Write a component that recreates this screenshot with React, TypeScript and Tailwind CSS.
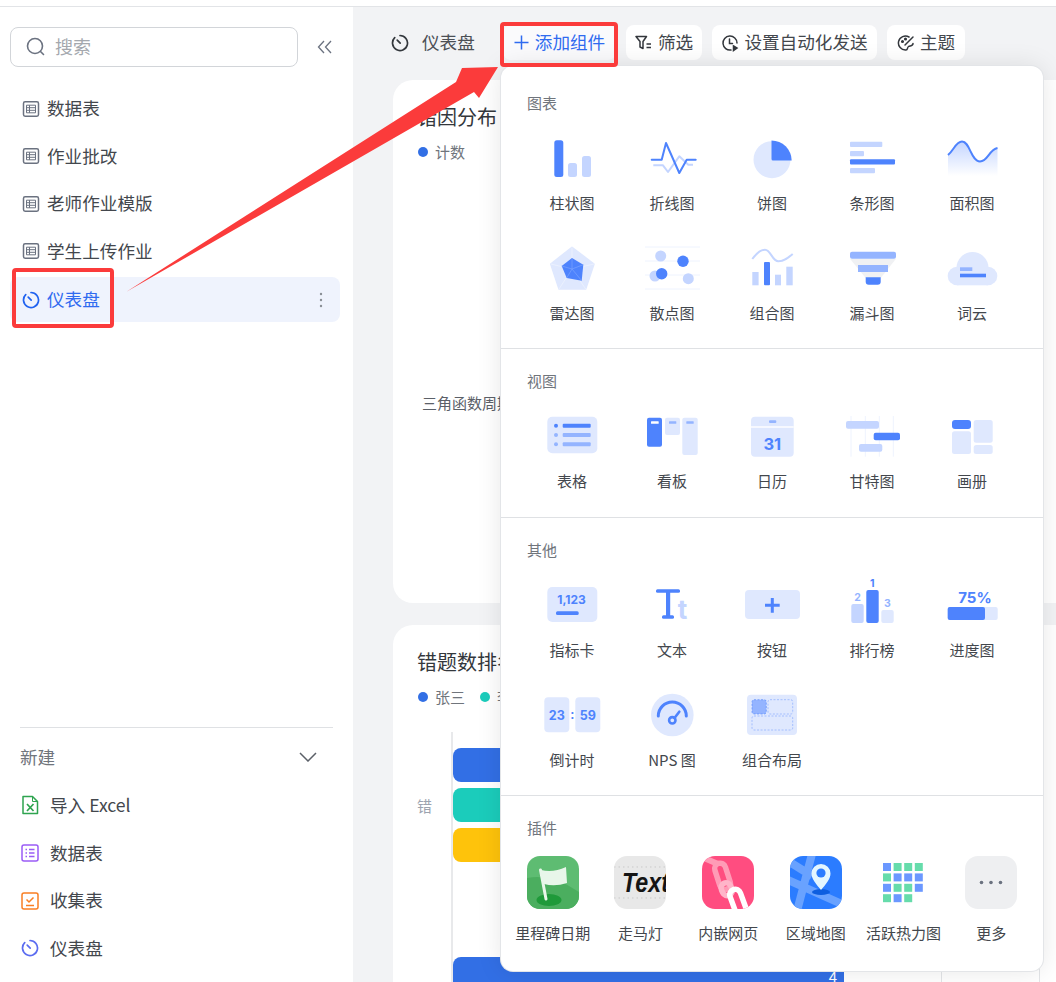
import type { ReactNode } from 'react';

const DARK = '#4e83fd';
const MID = '#94b4ff';
const LIGHT = '#c4d5ff';
const PALE = '#dfe8fe';

function Box({ children, size = 60 }: { children: ReactNode; size?: number }) {
  return (
    <svg width={size} height={size} viewBox={`0 0 ${size} ${size}`} fill="none">
      {children}
    </svg>
  );
}

// ---- chart icons ----
const BarIcon = () => (
  <Box>
    <rect x="12.3" y="12.3" width="9" height="36.7" rx="2.5" fill={DARK} />
    <rect x="26" y="35" width="9" height="14" rx="2.5" fill={LIGHT} />
    <rect x="40" y="28" width="9" height="21" rx="2.5" fill={LIGHT} />
  </Box>
);
const LineIcon = () => (
  <Box>
    <path d="M11.3 37.3H21L26 44L37.3 28.3L46.3 36.7H51" stroke={LIGHT} strokeWidth="2" strokeLinejoin="round" />
    <path d="M9.7 31.7H19.7L24 15L37.3 45L44.7 31.7H53.7" stroke={DARK} strokeWidth="2" strokeLinejoin="round" strokeLinecap="round" />
  </Box>
);
const PieIcon = () => (
  <Box>
    <circle cx="30" cy="31.7" r="18.5" fill={PALE} />
    <path d="M29.5 12.5A20.3 20.3 0 0 1 49.7 32.5L31 32.5Q29.5 32.5 29.5 31Z" fill={DARK} />
  </Box>
);
const HBarIcon = () => (
  <Box>
    <rect x="8" y="13.7" width="32.3" height="5.3" rx="1" fill={LIGHT} />
    <rect x="8" y="23" width="14" height="5.3" rx="1" fill={LIGHT} />
    <rect x="8" y="31.3" width="45" height="5.3" rx="1" fill={DARK} />
    <rect x="8" y="40" width="25" height="5.3" rx="1" fill={LIGHT} />
  </Box>
);
const AreaIcon = () => (
  <Box>
    <defs>
      <linearGradient id="area-fill" x1="0" y1="0" x2="0" y2="1">
        <stop offset="0" stopColor={LIGHT} />
        <stop offset="1" stopColor="#ffffff" />
      </linearGradient>
    </defs>
    <path d="M6 27C12 22 14 13.5 20 13.5C28 13.5 29 33.5 38 33.5C46 33.5 47 21.5 55.5 20V48H6Z" fill="url(#area-fill)" />
    <path d="M6 27C12 22 14 13.5 20 13.5C28 13.5 29 33.5 38 33.5C46 33.5 47 21.5 55.5 20" stroke={DARK} strokeWidth="2" />
  </Box>
);
const RadarIcon = () => (
  <Box>
    <path d="M30 9.3L52 26L43.7 51H17L8.7 26Z" fill={PALE} stroke={PALE} strokeWidth="1.5" strokeLinejoin="round" />
    <path d="M30 31L30 9.3M30 31L52 26M30 31L43.7 51M30 31L17 51M30 31L8.7 26" stroke="#eef3fe" strokeWidth="0.8" />
    <path d="M30 20L41.3 26.7L39.7 42.7L24.7 40L19.7 28Z" fill={DARK} />
    <path d="M30 31L30 20M30 31L41.3 26.7M30 31L39.7 42.7M30 31L24.7 40M30 31L19.7 28" stroke="#7aa2fd" strokeWidth="0.7" />
  </Box>
);
const ScatterIcon = () => (
  <Box>
    <path d="M3 9H58M3 23H58M3 37H58M3 51H58" stroke="#eef3fe" strokeWidth="1" />
    <circle cx="18.7" cy="18" r="5.5" fill={LIGHT} />
    <circle cx="41" cy="23.3" r="5.7" fill={DARK} />
    <circle cx="13" cy="38" r="5.5" fill={LIGHT} />
    <circle cx="19.7" cy="35.7" r="5.7" fill={DARK} />
    <circle cx="46.3" cy="40.7" r="5.5" fill={LIGHT} />
  </Box>
);
const ComboIcon = () => (
  <Box>
    <path d="M10.3 21C14 16 18 11.7 23 11.7C29 11.7 30 23.3 36.3 23.3C42 23.3 46 20 50.7 16" stroke={LIGHT} strokeWidth="2" />
    <rect x="10.3" y="34" width="6.3" height="13.3" fill={LIGHT} />
    <rect x="22" y="24" width="6" height="23.3" rx="1" fill={DARK} />
    <rect x="33" y="36.7" width="6" height="10.6" fill={LIGHT} />
    <rect x="44.3" y="28.7" width="6.4" height="18.6" fill={LIGHT} />
  </Box>
);
const FunnelIcon = () => (
  <Box>
    <path d="M8 20.7H54L38.7 40H23.7Z" fill="#f0f1f3" />
    <rect x="8" y="13.7" width="46" height="7" rx="2" fill={MID} />
    <rect x="16" y="27" width="30" height="7" fill={MID} />
    <path d="M23.7 39.3H38.7V43.7Q38.7 46.7 35.7 46.7H26.7Q23.7 46.7 23.7 43.7Z" fill={DARK} />
  </Box>
);
const CloudIcon = () => (
  <Box>
    <circle cx="15" cy="38" r="9.3" fill={PALE} />
    <circle cx="46" cy="38" r="9.3" fill={PALE} />
    <circle cx="30.5" cy="30" r="16" fill={PALE} />
    <rect x="15" y="30" width="31" height="17.3" fill={PALE} />
    <rect x="18" y="29.3" width="12.3" height="3.7" fill={MID} />
    <rect x="18" y="35.7" width="26" height="3.6" fill={DARK} />
  </Box>
);

// ---- view icons ----
const TableIcon = () => (
  <Box>
    <rect x="5.3" y="10.7" width="50" height="36.6" rx="5" fill={PALE} />
    <circle cx="14" cy="19.7" r="2" fill={DARK} />
    <circle cx="14" cy="29" r="2" fill={MID} />
    <circle cx="14" cy="38.3" r="2" fill={MID} />
    <rect x="20.7" y="17.7" width="28" height="4" rx="1" fill={DARK} />
    <rect x="20.7" y="27" width="28" height="4" rx="1" fill={MID} />
    <rect x="20.7" y="36.3" width="28" height="4" rx="1" fill={MID} />
  </Box>
);
const KanbanIcon = () => (
  <Box>
    <rect x="5" y="11.7" width="15" height="29" rx="2" fill={DARK} />
    <rect x="9" y="15.3" width="7.7" height="2.4" rx="0.5" fill="#ffffff" />
    <rect x="23" y="11.7" width="15" height="17.3" rx="2" fill={PALE} />
    <rect x="27" y="15.3" width="7.3" height="2.4" rx="0.5" fill={MID} />
    <rect x="40.3" y="11.7" width="15.4" height="37.3" rx="2" fill={PALE} />
    <rect x="44.3" y="15.3" width="7.4" height="2.4" rx="0.5" fill={MID} />
  </Box>
);
const CalendarIcon = () => (
  <Box>
    <rect x="9" y="10.7" width="42.7" height="40" rx="4" fill={PALE} />
    <rect x="9" y="20.3" width="42.7" height="1.4" fill="#ffffff" />
    <rect x="27" y="14.3" width="7.3" height="2.7" rx="1" fill={MID} />
    <text x="30.3" y="44" textAnchor="middle" fontSize="16.5" fontWeight="700" fill={DARK} fontFamily="Inter, sans-serif">31</text>
  </Box>
);
const GanttIcon = () => (
  <Box>
    <path d="M9 10V50.7M23.3 10V50.7M37.3 10V50.7M51.3 10V50.7" stroke="#eef3fe" strokeWidth="1" />
    <rect x="4" y="15" width="33" height="7.7" rx="2" fill={LIGHT} />
    <rect x="31.7" y="26.7" width="26.3" height="7.6" rx="2" fill={DARK} />
    <rect x="17" y="38" width="23.3" height="7.7" rx="2" fill={LIGHT} />
  </Box>
);
const AlbumIcon = () => (
  <Box>
    <rect x="10" y="14" width="19" height="9" rx="3" fill={DARK} />
    <rect x="10" y="25.3" width="19" height="22.7" rx="2.5" fill={PALE} />
    <rect x="31.7" y="14" width="19" height="22.7" rx="2.5" fill={PALE} />
    <rect x="31.7" y="39" width="19" height="9" rx="2.5" fill={PALE} />
  </Box>
);

// ---- other icons ----
const MetricIcon = () => (
  <Box>
    <rect x="5.3" y="12" width="50" height="35" rx="5" fill={PALE} />
    <text x="29.5" y="29" textAnchor="middle" fontSize="12" fontWeight="700" fill={DARK} fontFamily="Inter, sans-serif">1,123</text>
    <rect x="14" y="36.3" width="22.7" height="3.7" rx="1.5" fill={DARK} />
  </Box>
);
const TextIcon = () => (
  <Box>
    <rect x="14" y="14.3" width="24" height="3.4" rx="1.5" fill={DARK} />
    <rect x="24" y="15" width="4.2" height="27" fill={DARK} />
    <rect x="20" y="40.3" width="12" height="3.4" rx="1.5" fill={DARK} />
    <text x="40.5" y="43.5" textAnchor="middle" fontSize="26" fontWeight="700" fill={LIGHT} fontFamily="Inter, sans-serif">t</text>
  </Box>
);
const ButtonIcon = () => (
  <Box>
    <rect x="3" y="15" width="55" height="29" rx="4" fill={PALE} />
    <path d="M30.3 23V37.7M23 30.3H37.7" stroke={DARK} strokeWidth="3" />
  </Box>
);
const RankIcon = () => (
  <Box>
    <rect x="9.3" y="29" width="12.4" height="19" rx="2" fill={LIGHT} />
    <rect x="24.3" y="15" width="12.4" height="33" rx="2" fill={DARK} />
    <rect x="39.3" y="35" width="12.4" height="13" rx="2" fill={PALE} />
    <g fontSize="10.5" fontWeight="700" textAnchor="middle" fontFamily="Inter, sans-serif">
      <text x="30.3" y="12" fill={DARK}>1</text>
      <text x="15.5" y="26" fill={MID}>2</text>
      <text x="45.5" y="32.3" fill={MID}>3</text>
    </g>
  </Box>
);
const ProgressIcon = () => (
  <Box>
    <rect x="5.7" y="32" width="50" height="13" rx="2" fill={PALE} />
    <rect x="5.7" y="32" width="37.3" height="13" rx="2" fill={DARK} />
    <text x="33" y="28" textAnchor="middle" fontSize="15" fontWeight="700" fill={DARK} fontFamily="Inter, sans-serif">75%</text>
  </Box>
);
const CountdownIcon = () => (
  <Box>
    <rect x="2.3" y="12.3" width="25" height="35" rx="4" fill={PALE} />
    <rect x="33.3" y="12.3" width="25" height="35" rx="4" fill={PALE} />
    <g fontSize="12.5" fontWeight="700" textAnchor="middle" fill={DARK} fontFamily="Inter, sans-serif">
      <text x="14.8" y="34.5">23</text>
      <text x="30.4" y="33.5">:</text>
      <text x="45.8" y="34.5">59</text>
    </g>
  </Box>
);
const NpsIcon = () => (
  <Box>
    <circle cx="30.3" cy="30" r="21.3" fill={PALE} />
    <path d="M16.3 31A14 14 0 0 1 44.3 31" stroke={DARK} strokeWidth="3" strokeLinecap="round" />
    <circle cx="30.3" cy="35.3" r="3.2" stroke={DARK} strokeWidth="2.6" />
    <path d="M32.5 33L37.3 26.7" stroke={DARK} strokeWidth="2.6" strokeLinecap="round" />
  </Box>
);
const LayoutIcon = () => (
  <Box>
    <rect x="5" y="9.7" width="50" height="40.3" rx="4" fill={PALE} />
    <rect x="10" y="14.7" width="14.3" height="14.3" rx="2" fill={MID} stroke={DARK} strokeWidth="0.6" strokeDasharray="2 1.5" />
    <rect x="26" y="14.7" width="24.7" height="14.3" rx="2" stroke={MID} strokeWidth="0.8" strokeDasharray="2 1.5" />
    <rect x="10" y="31" width="40.7" height="14" rx="2" stroke={MID} strokeWidth="0.8" strokeDasharray="2 1.5" />
  </Box>
);

// ---- plugin icons ----
const PluginBox = ({ children }: { children: ReactNode }) => (
  <svg width="52" height="53" viewBox="0 0 52 53" fill="none" className="rounded-[13px]">
    {children}
  </svg>
);
const MilestoneIcon = () => (
  <PluginBox>
    <rect width="52" height="53" fill="#5ebc72" />
    <path d="M0 22Q25 17 52 36V53H0Z" fill="#4bae5f" />
    <ellipse cx="22" cy="44" rx="12.5" ry="6" fill="#1f9a3a" />
    <path d="M13.5 14L19 43" stroke="#e8f6ea" strokeWidth="3" strokeLinecap="round" />
    <path d="M14 14Q26 17 39 11L40 27Q28 31 17 28Z" fill="#e8f6ea" />
  </PluginBox>
);
const MarqueeIcon = () => (
  <PluginBox>
    <rect width="52" height="53" fill="#e8e8e8" />
    <path d="M0 11H52M0 42H52" stroke="#c9c9c9" strokeWidth="1" strokeDasharray="1.5 3" />
    <text x="8" y="36" fontSize="28" fontWeight="700" fontStyle="italic" fill="#141414" textLength="47" lengthAdjust="spacingAndGlyphs" fontFamily="Liberation Sans, sans-serif">Text</text>
  </PluginBox>
);
const EmbedIcon = () => (
  <PluginBox>
    <rect width="52" height="53" fill="#ff4d80" />
    <path d="M2 2L16 8" stroke="#ff9bb6" strokeWidth="6" />
    <rect x="15" y="7" width="11" height="27" rx="5.5" transform="rotate(-18 20 20)" stroke="#ff9bb6" strokeWidth="5.5" />
    <rect x="19.5" y="27" width="10" height="13" rx="5" stroke="#ffb5c9" strokeWidth="5.5" transform="rotate(-25 24 33)" />
    <rect x="30" y="33" width="11" height="30" rx="5.5" transform="rotate(-20 35 45)" stroke="#ffffff" strokeWidth="5.5" />
  </PluginBox>
);
const MapIcon = () => (
  <PluginBox>
    <rect width="52" height="53" fill="#2b7cff" />
    <path d="M22 -2L7 55M-2 24L54 49M-2 5L22 20" stroke="#69a2ff" strokeWidth="8" />
    <ellipse cx="31" cy="36" rx="9" ry="3" fill="#0d5ee0" />
    <path d="M31 34C26 28 21.500 23 21.500 17.500A9.500 9.500 0 0 1 40.500 17.500C40.500 23 36 28 31 34Z" fill="#e3f6ff" />
    <circle cx="31" cy="17" r="4.600" fill="#2b7cff" />
  </PluginBox>
);
const HeatIcon = () => {
  const blue = '#6b98ff';
  const green = '#66dcab';
  const rows = [
    [blue, green, green, green],
    [green, blue, blue, blue],
    [blue, green, green, blue],
    [green, blue, green],
  ];
  return (
    <PluginBox>
      {rows.map((row, r) =>
        row.map((color, c) => (
          <rect key={`${r}-${c}`} x={6 + c * 10.6} y={7 + r * 10.4} width="8" height="8" fill={color} />
        ))
      )}
    </PluginBox>
  );
};
const MoreIcon = () => (
  <PluginBox>
    <rect width="52" height="53" fill="#eeeff1" />
    <circle cx="16.500" cy="26.500" r="1.800" fill="#6b7280" />
    <circle cx="26" cy="26.500" r="1.800" fill="#6b7280" />
    <circle cx="35.500" cy="26.500" r="1.800" fill="#6b7280" />
  </PluginBox>
);

// ---- small ui icons ----
const SheetIcon = ({ color = '#6b7280' }: { color?: string }) => (
  <svg width="18" height="18" viewBox="0 0 18 18" fill="none" stroke={color} strokeWidth="1.5">
    <rect x="1.500" y="1.800" width="15" height="14.400" rx="1.600" />
    <path d="M4.500 5.200H13.500V12.800H4.500ZM4.500 7.700H13.500M4.500 10.300H13.500M7.500 5.200V12.800" strokeWidth="1" />
  </svg>
);
const ClockIcon = ({ color }: { color: string }) => (
  <svg width="18" height="18" viewBox="0 0 18 18" fill="none" stroke={color} strokeWidth="1.700" strokeLinecap="round">
    <path d="M9 1.500A7.500 7.500 0 1 1 3.700 3.700" />
    <path d="M6.200 6.200L9.200 9.200" />
  </svg>
);

const chartItems = [
  { label: '柱状图', icon: BarIcon },
  { label: '折线图', icon: LineIcon },
  { label: '饼图', icon: PieIcon },
  { label: '条形图', icon: HBarIcon },
  { label: '面积图', icon: AreaIcon },
  { label: '雷达图', icon: RadarIcon },
  { label: '散点图', icon: ScatterIcon },
  { label: '组合图', icon: ComboIcon },
  { label: '漏斗图', icon: FunnelIcon },
  { label: '词云', icon: CloudIcon },
];
const viewItems = [
  { label: '表格', icon: TableIcon },
  { label: '看板', icon: KanbanIcon },
  { label: '日历', icon: CalendarIcon },
  { label: '甘特图', icon: GanttIcon },
  { label: '画册', icon: AlbumIcon },
];
const otherItems = [
  { label: '指标卡', icon: MetricIcon },
  { label: '文本', icon: TextIcon },
  { label: '按钮', icon: ButtonIcon },
  { label: '排行榜', icon: RankIcon },
  { label: '进度图', icon: ProgressIcon },
  { label: '倒计时', icon: CountdownIcon },
  { label: 'NPS 图', icon: NpsIcon },
  { label: '组合布局', icon: LayoutIcon },
];
const pluginItems = [
  { label: '里程碑日期', icon: MilestoneIcon },
  { label: '走马灯', icon: MarqueeIcon },
  { label: '内嵌网页', icon: EmbedIcon },
  { label: '区域地图', icon: MapIcon },
  { label: '活跃热力图', icon: HeatIcon },
  { label: '更多', icon: MoreIcon },
];

function IconGrid({ items }: { items: { label: string; icon: () => ReactNode }[] }) {
  return (
    <div className="grid grid-cols-5 w-[500px] gap-y-[24px]">
      {items.map((item) => (
        <div key={item.label} className="flex flex-col items-center gap-[4px]">
          <item.icon />
          <span className="text-[15px] leading-[22px] text-[#43474d]">{item.label}</span>
        </div>
      ))}
    </div>
  );
}

function SectionTitle({ children }: { children: ReactNode }) {
  return <div className="text-[15px] leading-[22px] text-[#70757c]">{children}</div>;
}

function AddWidgetMenu() {
  return (
    <div className="absolute left-[501px] top-[66px] z-10 w-[542px] h-[905px] bg-white rounded-[12px] ring-1 ring-[#e3e5e8] shadow-[0_0_26px_rgba(0,0,0,0.1)]">
      <div className="pl-[26px] pt-[26px]">
        <SectionTitle>图表</SectionTitle>
      </div>
      <div className="pl-[21px] pt-[14px] pb-[24px] border-b border-[#dfe1e4]">
        <IconGrid items={chartItems} />
      </div>
      <div className="pl-[26px] pt-[21px]">
        <SectionTitle>视图</SectionTitle>
      </div>
      <div className="pl-[21px] pt-[14px] pb-[25px] border-b border-[#dfe1e4]">
        <IconGrid items={viewItems} />
      </div>
      <div className="pl-[26px] pt-[21px]">
        <SectionTitle>其他</SectionTitle>
      </div>
      <div className="pl-[21px] pt-[14px] pb-[24px] border-b border-[#dfe1e4]">
        <IconGrid items={otherItems} />
      </div>
      <div className="pl-[26px] pt-[21px]">
        <SectionTitle>插件</SectionTitle>
      </div>
      <div className="pl-[8px] pt-[17px] grid grid-cols-6 w-[534px]">
        {pluginItems.map((item) => (
          <div key={item.label} className="flex flex-col items-center gap-[13px]">
            <item.icon />
            <span className="text-[15px] leading-[22px] text-[#43474d] whitespace-nowrap">{item.label}</span>
          </div>
        ))}
      </div>
    </div>
  );
}

function Sidebar() {
  return (
    <aside className="w-[353px] shrink-0 bg-white flex flex-col justify-between">
      <div>
        <div className="flex items-center pl-[10px] pt-[20px]">
          <div className="w-[288px] h-[40px] border border-[#d2d5d9] rounded-[8px] flex items-center pl-[15px] gap-[9px]">
            <svg width="20" height="20" viewBox="0 0 20 20" fill="none" stroke="#6b7280" strokeWidth="1.600" strokeLinecap="round">
              <circle cx="9" cy="9" r="7.500" />
              <path d="M14.500 14.500L17.500 17.500" />
            </svg>
            <span className="text-[18px] leading-[24px] pb-[2px] text-[#a4a8ae]">搜索</span>
          </div>
          <svg className="ml-[19px]" width="16" height="14" viewBox="0 0 16 14" fill="none" stroke="#6b7280" strokeWidth="1.300">
            <path d="M7 1L1.500 7L7 13M14 1L8.500 7L14 13" />
          </svg>
        </div>
        <div className="flex flex-col gap-[2.5px] mt-[19px] ml-[10px] w-[330px]">
          {['数据表', '作业批改', '老师作业模版', '学生上传作业'].map((label) => (
            <div key={label} className="h-[45px] pl-[12px] flex items-center gap-[7px] text-[17.6px] text-[#43474d]">
              <SheetIcon />
              {label}
            </div>
          ))}
          <div className="h-[45px] mt-[1px] pl-[12px] pr-[17px] flex items-center gap-[7px] text-[17.6px] text-[#2f6bf0] bg-[#eff3fd] rounded-[8px]">
            <ClockIcon color="#1f62f0" />
            <span className="flex-1 pb-[1px]">仪表盘</span>
            <svg width="4" height="16" viewBox="0 0 4 16" fill="#8a8f96">
              <circle cx="2" cy="2" r="1.200" />
              <circle cx="2" cy="8" r="1.200" />
              <circle cx="2" cy="14" r="1.200" />
            </svg>
          </div>
        </div>
      </div>

      <div className="mx-[20px] pb-[10px] border-t border-[#dfe1e4]">
        <div className="h-[44px] mt-[7px] mb-[2.600px] pr-[16px] flex items-center justify-between text-[17.6px] text-[#70757c]">
          新建
          <svg width="18" height="10" viewBox="0 0 18 10" fill="none" stroke="#5b6068" strokeWidth="1.500">
            <path d="M1 1L9 9L17 1" />
          </svg>
        </div>
        <div className="h-[47.600px] flex items-center gap-[11px] pl-[1px] text-[17.6px] text-[#43474d]">
          <svg width="18" height="20" viewBox="0 0 18 20" fill="none" stroke="#2ea44f" strokeWidth="1.500">
            <path d="M2 1.500H11.500L16.500 6.500V18.500H2Z" strokeLinejoin="round" />
            <path d="M11.500 1.500V6.500H16.500" strokeWidth="1" />
            <path d="M6 9L12.500 16M12.500 9L6 16" strokeWidth="1.700" />
          </svg>
          导入 Excel
        </div>
        <div className="h-[47.600px] flex items-center gap-[11px] pl-[1px] text-[17.6px] text-[#43474d]">
          <svg width="18" height="18" viewBox="0 0 18 18" fill="none" stroke="#9b5cf6" strokeWidth="1.500">
            <rect x="1" y="1" width="16" height="16" rx="2" />
            <path d="M4.500 5.500H6M8 5.500H13.500M4.500 9H6M8 9H13.500M4.500 12.500H6M8 12.500H13.500" strokeWidth="1.500" />
          </svg>
          数据表
        </div>
        <div className="h-[47.600px] flex items-center gap-[11px] pl-[1px] text-[17.6px] text-[#43474d]">
          <svg width="18" height="18" viewBox="0 0 18 18" fill="none" stroke="#f97f24" strokeWidth="1.500">
            <rect x="1" y="1" width="16" height="16" rx="2" />
            <path d="M5.500 7.500L8 10L12.500 5.500M5 13.500H13" />
          </svg>
          收集表
        </div>
        <div className="h-[47.600px] flex items-center gap-[11px] pl-[1px] text-[17.6px] text-[#43474d]">
          <ClockIcon color="#5b6cf0" />
          仪表盘
        </div>
      </div>
    </aside>
  );
}

function Toolbar() {
  return (
    <div className="h-[35px] mt-[18px] flex items-center text-[17.6px] leading-[24px] text-[#43474d]">
      <div className="flex items-center gap-[13px] ml-[38px] w-[112px]">
        <svg width="18" height="18" viewBox="0 0 18 18" fill="none" stroke="#33373c" strokeWidth="1.700" strokeLinecap="round">
          <path d="M9 1.500A7.500 7.500 0 1 1 3.700 3.700" />
          <path d="M6.200 6.200L9.200 9.200" />
        </svg>
        <span className="text-[#4b4f55] pb-[2px]">仪表盘</span>
      </div>
      <button className="h-[35px] w-[113px] flex items-center justify-center gap-[6px] bg-[#fafafc] rounded-[8px] text-[#2f6bf0]">
        <svg width="15" height="15" viewBox="0 0 15 15" fill="none" stroke="#2f6bf0" strokeWidth="1.500">
          <path d="M7.500 0.500V14.500M0.500 7.500H14.500" />
        </svg>
        <span className="pb-[2px]">添加组件</span>
      </button>
      <button className="ml-[10px] h-[35px] w-[76px] flex items-center justify-center gap-[5px] bg-white rounded-[8px]">
        <svg width="18" height="16" viewBox="0 0 18 16" fill="none" stroke="#33373c" strokeWidth="1.500" strokeLinejoin="round">
          <path d="M1 1.500H11.500L8 6.500V13.500L5 12V6.500Z" />
          <path d="M11.500 9H16M11.500 12.500H16" />
        </svg>
        <span className="pb-[2px]">筛选</span>
      </button>
      <button className="ml-[10px] h-[35px] w-[165px] flex items-center justify-center gap-[5px] bg-white rounded-[8px]">
        <svg width="18" height="18" viewBox="0 0 18 18" fill="none" stroke="#33373c" strokeWidth="1.500" strokeLinecap="round">
          <path d="M10 16A7 7 0 1 1 16 9" />
          <path d="M8.500 5V9.500H11.500" />
          <path d="M12.500 12L16 14L12.500 16.500Z" fill="#33373c" />
        </svg>
        <span className="pb-[2px]">设置自动化发送</span>
      </button>
      <button className="ml-[10px] h-[35px] w-[78px] flex items-center justify-center gap-[5px] bg-white rounded-[8px]">
        <svg width="18" height="18" viewBox="0 0 18 18" fill="none" stroke="#33373c" strokeWidth="1.500" strokeLinecap="round">
          <path d="M12 3A7 7 0 1 0 9 16C11 16 10 13.500 11.500 12.500C13 11.500 16 12.500 16 9.500" />
          <path d="M8 11L16 3" />
          <circle cx="5.500" cy="7.500" r="0.800" />
          <circle cx="8.500" cy="5" r="0.800" />
        </svg>
        <span className="pb-[2px]">主题</span>
      </button>
    </div>
  );
}

function LegendDot({ color, label }: { color: string; label: string }) {
  return (
    <div className="flex items-center gap-[7px]">
      <span className={`w-[10px] h-[10px] rounded-full ${color}`} />
      <span className="text-[15px] leading-[22px] text-[#70757c]">{label}</span>
    </div>
  );
}

function Cards() {
  return (
    <div className="ml-[40px] mt-[20px] w-[700px] flex flex-col gap-[22px]">
      <div className="h-[523px] shrink-0 bg-white rounded-[20px] pl-[24px] pt-[23px]">
        <div className="text-[20px] leading-[28px] text-[#33373c]">错因分布</div>
        <div className="mt-[10px] ml-[1px] flex">
          <LegendDot color="bg-[#326fe5]" label="计数" />
        </div>
        <div className="mt-[229px] ml-[5px] text-[15px] leading-[22px] text-[#5b6068]">三角函数周期</div>
      </div>

      <div className="shrink-0 bg-white rounded-[20px] pl-[24px] pt-[23px] h-[400px]">
        <div className="text-[20px] leading-[28px] text-[#33373c]">错题数排名</div>
        <div className="mt-[10px] ml-[1px] flex gap-[15px]">
          <LegendDot color="bg-[#326fe5]" label="张三" />
          <LegendDot color="bg-[#1bccbb]" label="李四" />
        </div>
        <div className="mt-[24px] flex">
          <div className="w-[35px] flex items-center pb-[77px] text-[15px] text-[#9ca3af]">错</div>
          <div className="border-l-2 border-[#e8e9eb] pt-[16px] flex flex-col gap-[6px] pb-[95px] -ml-[1px]">
            <div className="w-[500px] h-[34px] bg-[#326fe5] rounded-[8px]" />
            <div className="w-[500px] h-[34px] bg-[#1bccbb] rounded-[8px]" />
            <div className="w-[500px] h-[34px] bg-[#fec30b] rounded-[8px]" />
          </div>
        </div>
        <div className="ml-[34px] border-l-2 border-[#e8e9eb] flex h-[40px]">
          <div className="w-[391px] h-[34px] bg-[#326fe5] rounded-[8px] flex items-center justify-end pr-[7px] pt-[6px] text-[15px] text-white shrink-0">4</div>
          <div className="ml-[97px] w-[98px] border-l border-[#e3e5e8] shrink-0" />
          <div className="w-[98px] border-l border-[#e3e5e8] shrink-0" />
        </div>
      </div>
    </div>
  );
}

export default function App() {
  return (
    <div className="relative w-[1056px] h-[982px] overflow-hidden flex flex-col bg-white font-['Noto_Sans_CJK_SC','Noto_Sans',sans-serif]">
      <div className="h-[7px] shrink-0 bg-white border-b border-[#e2e4e7]" />
      <div className="flex-1 flex min-h-0">
        <Sidebar />
        <main className="flex-1 min-w-0 bg-[#f2f3f5] overflow-hidden">
          <Toolbar />
          <Cards />
        </main>
      </div>

      <AddWidgetMenu />

      {/* annotation arrow + highlight boxes */}
      <svg className="absolute left-0 top-0 z-20 pointer-events-none" width="1056" height="982" viewBox="0 0 1056 982">
        <path d="M126 292L456 82L462 68L498 67L479 98L474 92Z" fill="#fb3b3b" />
      </svg>
      <div className="absolute z-20 left-[12px] top-[268px] w-[102px] h-[60px] border-[4px] border-[#fb3b3b] rounded-[4px]" />
      <div className="absolute z-20 left-[500px] top-[22px] w-[118px] h-[45px] border-[4px] border-[#fb3b3b] rounded-[4px]" />
    </div>
  );
}
